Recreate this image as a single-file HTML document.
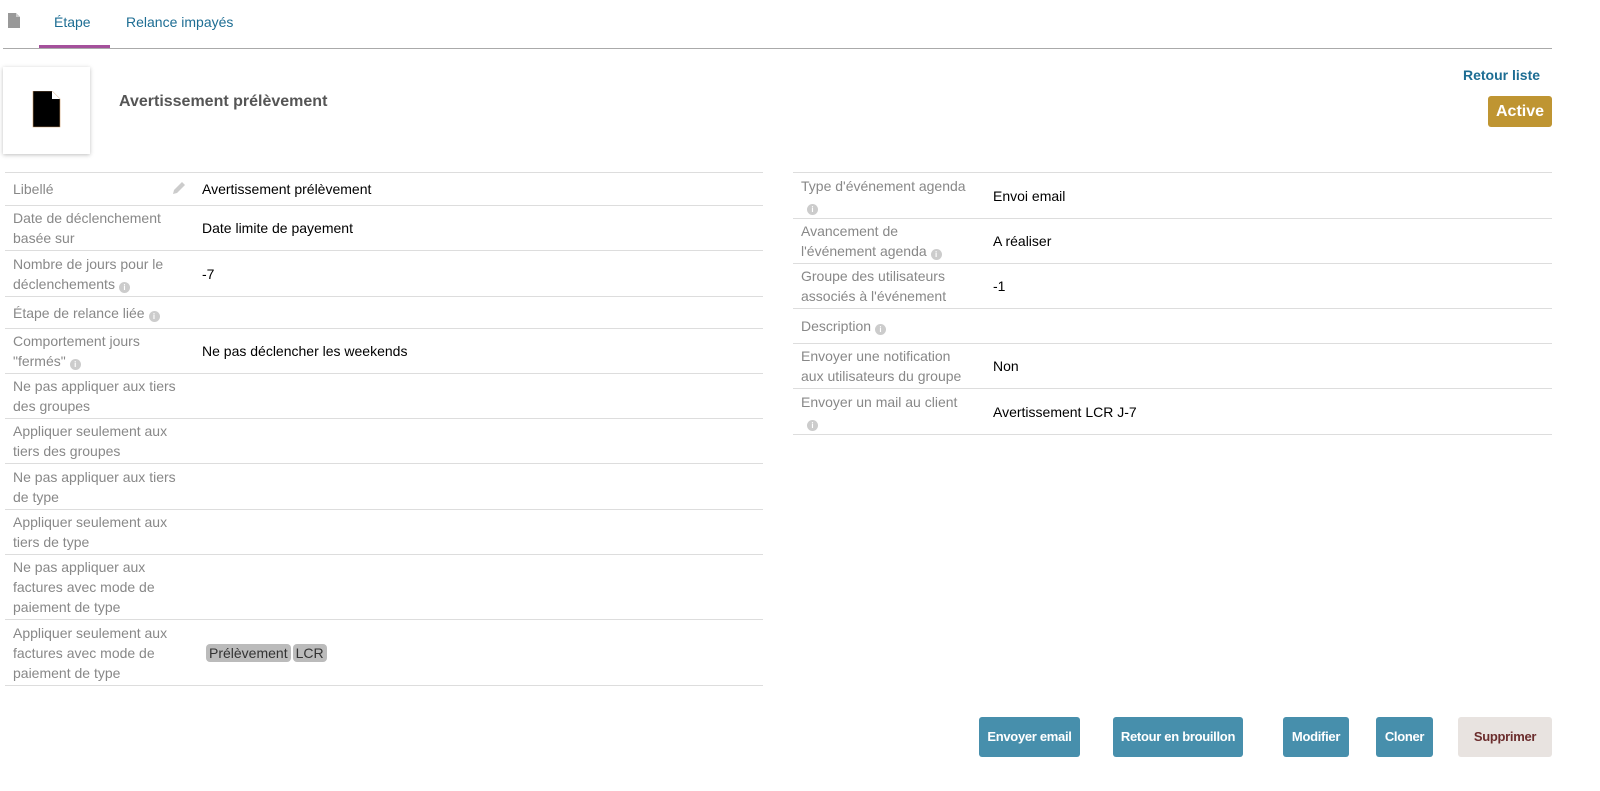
<!DOCTYPE html>
<html><head><meta charset="utf-8"><style>
*{box-sizing:border-box;margin:0;padding:0}
html,body{width:1600px;height:791px;overflow:hidden}
body{background:#fff;font-family:"Liberation Sans",sans-serif;font-size:14px;position:relative;color:#000}
.a{position:absolute}
.row{position:absolute;border-bottom:1px solid #ddd;display:flex;align-items:center}
.lab{color:#888;line-height:20px;padding-left:8px}
.val{position:absolute;line-height:20px}
.i{display:inline-block;width:11px;height:11px;border-radius:50%;background:#ccc;color:#fff;font-size:8px;line-height:11px;text-align:center;font-weight:bold;vertical-align:-1px;margin-left:4px}
.btn{position:absolute;top:717px;height:40px;border-radius:3px;background:#478fac;color:#fff;font-weight:bold;font-size:13px;letter-spacing:-0.3px;line-height:40px;text-align:center;white-space:nowrap}
.tag{display:inline-block;background:#bbb;border-radius:4px;padding:0 3px;line-height:18px;color:#333;margin-right:2px}
</style></head><body>
<svg class="a" style="left:8px;top:13px" width="12" height="15" viewBox="0 0 12 15"><path d="M0 0H8L12 4V15H0Z" fill="#999"/><path d="M8 0V4H12" fill="#ccc"/></svg>
<div class="a" style="left:54px;top:14px;color:#1d6d93;font-size:14px">Étape</div>
<div class="a" style="left:126px;top:14px;color:#1d6d93;font-size:14px">Relance impayés</div>
<div class="a" style="left:39px;top:45px;width:71px;height:3px;background:#a4509b"></div>
<div class="a" style="left:3px;top:48px;width:1549px;height:1px;background:#aaa"></div>
<div class="a" style="left:3px;top:67px;width:87px;height:87px;background:#fff;box-shadow:0 1px 4px rgba(0,0,0,.25)"></div>
<svg class="a" style="left:32px;top:91px" width="29" height="37" viewBox="0 0 29 37"><path d="M1 0H20L28 8V36H1Z" fill="#000" stroke="#c96" stroke-width="0.6"/><path d="M20 0V8H28" fill="#fff"/></svg>
<div class="a" style="left:119px;top:93px;font-size:16px;font-weight:bold;color:#555">Avertissement prélèvement</div>
<div class="a" style="left:1463px;top:67px;font-weight:bold;color:#1d6d93">Retour liste</div>
<div class="a" style="left:1488px;top:96px;width:64px;height:31px;background:#bf9532;border-radius:3px;color:#fff;font-weight:bold;font-size:16px;line-height:31px;text-align:center">Active</div>

<div class="a" style="left:5px;top:172px;width:758px;height:1px;background:#ddd"></div>
<div class="row" style="left:5px;top:173px;width:758px;height:33px"><div class="lab">Libellé</div><svg class="a" style="left:166px;top:8px" width="15" height="15" viewBox="0 0 15 15"><path d="M2 13L3 9L11 1L14 4L6 12Z" fill="#ccc"/></svg><div class="val" style="left:197px">Avertissement prélèvement</div></div>
<div class="row" style="left:5px;top:206px;width:758px;height:45px"><div class="lab">Date de déclenchement<br>basée sur</div><div class="val" style="left:197px">Date limite de payement</div></div>
<div class="row" style="left:5px;top:251px;width:758px;height:46px"><div class="lab">Nombre de jours pour le<br>déclenchements<span class="i">i</span></div><div class="val" style="left:197px">-7</div></div>
<div class="row" style="left:5px;top:297px;width:758px;height:32px"><div class="lab">Étape de relance liée<span class="i">i</span></div></div>
<div class="row" style="left:5px;top:329px;width:758px;height:45px"><div class="lab">Comportement jours<br>"fermés"<span class="i">i</span></div><div class="val" style="left:197px">Ne pas déclencher les weekends</div></div>
<div class="row" style="left:5px;top:374px;width:758px;height:45px"><div class="lab">Ne pas appliquer aux tiers<br>des groupes</div></div>
<div class="row" style="left:5px;top:419px;width:758px;height:45px"><div class="lab">Appliquer seulement aux<br>tiers des groupes</div></div>
<div class="row" style="left:5px;top:464px;width:758px;height:46px"><div class="lab">Ne pas appliquer aux tiers<br>de type</div></div>
<div class="row" style="left:5px;top:510px;width:758px;height:45px"><div class="lab">Appliquer seulement aux<br>tiers de type</div></div>
<div class="row" style="left:5px;top:555px;width:758px;height:65px"><div class="lab">Ne pas appliquer aux<br>factures avec mode de<br>paiement de type</div></div>
<div class="row" style="left:5px;top:620px;width:758px;height:66px"><div class="lab">Appliquer seulement aux<br>factures avec mode de<br>paiement de type</div><div class="val" style="left:201px"><span class="tag">Prélèvement</span><span class="tag">LCR</span></div></div>

<div class="a" style="left:793px;top:172px;width:759px;height:1px;background:#ddd"></div>
<div class="row" style="left:793px;top:173px;width:759px;height:46px"><div class="lab">Type d'événement agenda<br><span class="i" style="margin-left:6px">i</span></div><div class="val" style="left:200px">Envoi email</div></div>
<div class="row" style="left:793px;top:219px;width:759px;height:45px"><div class="lab">Avancement de<br>l'événement agenda<span class="i">i</span></div><div class="val" style="left:200px">A réaliser</div></div>
<div class="row" style="left:793px;top:264px;width:759px;height:45px"><div class="lab">Groupe des utilisateurs<br>associés à l'événement</div><div class="val" style="left:200px">-1</div></div>
<div class="row" style="left:793px;top:309px;width:759px;height:35px"><div class="lab">Description<span class="i">i</span></div></div>
<div class="row" style="left:793px;top:344px;width:759px;height:45px"><div class="lab">Envoyer une notification<br>aux utilisateurs du groupe</div><div class="val" style="left:200px">Non</div></div>
<div class="row" style="left:793px;top:389px;width:759px;height:46px"><div class="lab">Envoyer un mail au client<br><span class="i" style="margin-left:6px">i</span></div><div class="val" style="left:200px">Avertissement LCR J-7</div></div>

<div class="btn" style="left:979px;width:101px">Envoyer email</div>
<div class="btn" style="left:1113px;width:130px">Retour en brouillon</div>
<div class="btn" style="left:1283px;width:66px">Modifier</div>
<div class="btn" style="left:1376px;width:57px">Cloner</div>
<div class="btn" style="left:1458px;width:94px;background:#e8e3e0;color:#6b2d2d">Supprimer</div>
</body></html>
